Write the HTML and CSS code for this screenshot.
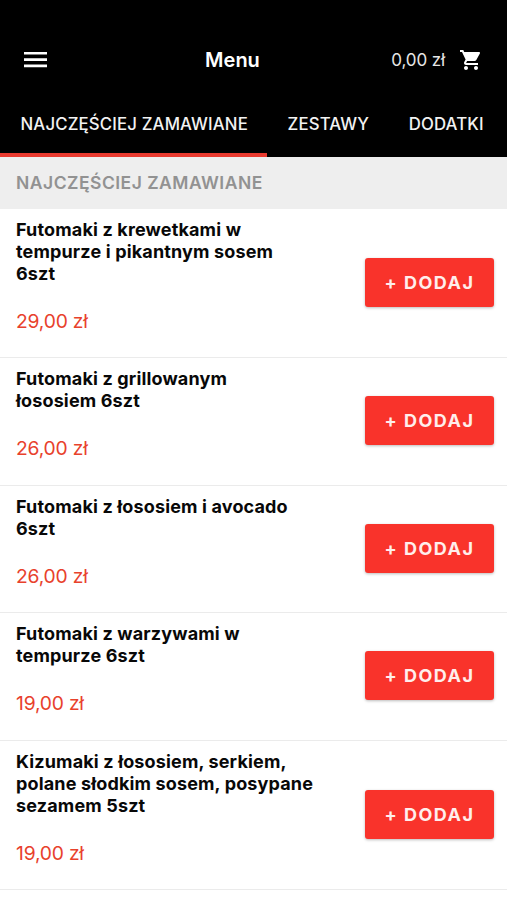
FILE: index.html
```html
<!DOCTYPE html>
<html lang="pl">
<head>
<meta charset="utf-8">
<title>Menu</title>
<link rel="stylesheet" href="styles.css">
</head>
<body>
<header class="header">
  <div class="bar">
    <svg class="burger" viewBox="0 0 23 16" aria-hidden="true"><path d="M0 0h23v2.6H0zM0 6.3h23v2.6H0zM0 12.6h23v2.6H0z"/></svg>
    <h1 class="title">Menu</h1>
    <div class="cart">
      <span>0,00 zł</span>
      <svg class="cart-icon" viewBox="0 0 24 24" aria-hidden="true"><path d="M7 18c-1.1 0-1.99.9-1.99 2S5.9 22 7 22s2-.9 2-2-.9-2-2-2zM1 2v2h2l3.6 7.59-1.35 2.45c-.16.28-.25.61-.25.96 0 1.1.9 2 2 2h12v-2H7.42c-.14 0-.25-.11-.25-.25l.03-.12.9-1.63h7.45c.75 0 1.41-.41 1.75-1.03l3.58-6.49c.08-.14.12-.31.12-.48 0-.55-.45-1-1-1H5.21l-.94-2H1zm16 16c-1.1 0-1.99.9-1.99 2s.89 2 1.99 2 2-.9 2-2-.9-2-2-2z"/></svg>
    </div>
  </div>
  <nav class="tabs">
    <span class="tab active">NAJCZĘŚCIEJ ZAMAWIANE</span>
    <span class="tab">ZESTAWY</span>
    <span class="tab">DODATKI</span>
  </nav>
</header>
<h2 class="section">NAJCZĘŚCIEJ ZAMAWIANE</h2>
<main>
  <article class="item"><div class="info"><h3>Futomaki z krewetkami w<br>tempurze i pikantnym sosem<br>6szt</h3><p>29,00 zł</p></div><button class="add">+ DODAJ</button></article>
  <article class="item"><div class="info"><h3>Futomaki z grillowanym<br>łososiem 6szt</h3><p>26,00 zł</p></div><button class="add">+ DODAJ</button></article>
  <article class="item"><div class="info"><h3>Futomaki z łososiem i avocado<br>6szt</h3><p>26,00 zł</p></div><button class="add">+ DODAJ</button></article>
  <article class="item"><div class="info"><h3>Futomaki z warzywami w<br>tempurze 6szt</h3><p>19,00 zł</p></div><button class="add">+ DODAJ</button></article>
  <article class="item"><div class="info"><h3>Kizumaki z łososiem, serkiem,<br>polane słodkim sosem, posypane<br>sezamem 5szt</h3><p>19,00 zł</p></div><button class="add">+ DODAJ</button></article>
</main>
</body>
</html>
```
FILE: styles.css
```css
* { box-sizing: border-box; margin: 0; }
body { background: #fff; color: #080808; font-family: Inter, sans-serif; overflow: hidden; }
.header { background: #000; color: #fff; height: 157px; padding-top: 28px; }
.bar { display: grid; grid-template-columns: 1fr auto 1fr; align-items: center; height: 64px; padding: 0 24px; }
.burger { width: 23px; height: 16px; fill: #fff; }
.title { font-size: 20px; font-weight: 600; margin-left: -42px; }
.cart { display: flex; justify-content: flex-end; align-items: center; gap: 14px; font-size: 17px; letter-spacing: -.1px; color: #e6e6e6; white-space: nowrap; }
.cart-icon { width: 24px; height: 24px; fill: #fff; }
.tabs { display: flex; height: 65px; white-space: nowrap; }
.tab { padding: 0 19.5px 0 20px; line-height: 64px; font-size: 16.8px; font-weight: 500; letter-spacing: .15px; color: #f2f2f2; }
.active { padding-left: 20.5px; border-bottom: 4px solid #e93a2f; }
.section { height: 51.5px; padding-left: 16px; background: #eee; color: #929292; font-size: 17.5px; line-height: 52px; font-weight: 600; letter-spacing: .49px; }
.item { display: flex; justify-content: space-between; align-items: center; padding: 10px 13px 24px 16px; border-bottom: 1px solid #ebebeb; }
.item h3 { font-size: 18px; line-height: 22px; font-weight: 650; letter-spacing: .15px; white-space: nowrap; }
.item p { margin-top: 24px; font-size: 19.3px; line-height: 24.5px; letter-spacing: -.2px; color: #e8412c; }
.add { width: 129px; height: 49px; margin-top: 13px; border: 0; border-radius: 3px; background: #f9332b; color: #ffeeec; font: 650 18px Inter, sans-serif; letter-spacing: 1.5px; box-shadow: 0 1px 3px #0004; }
```
